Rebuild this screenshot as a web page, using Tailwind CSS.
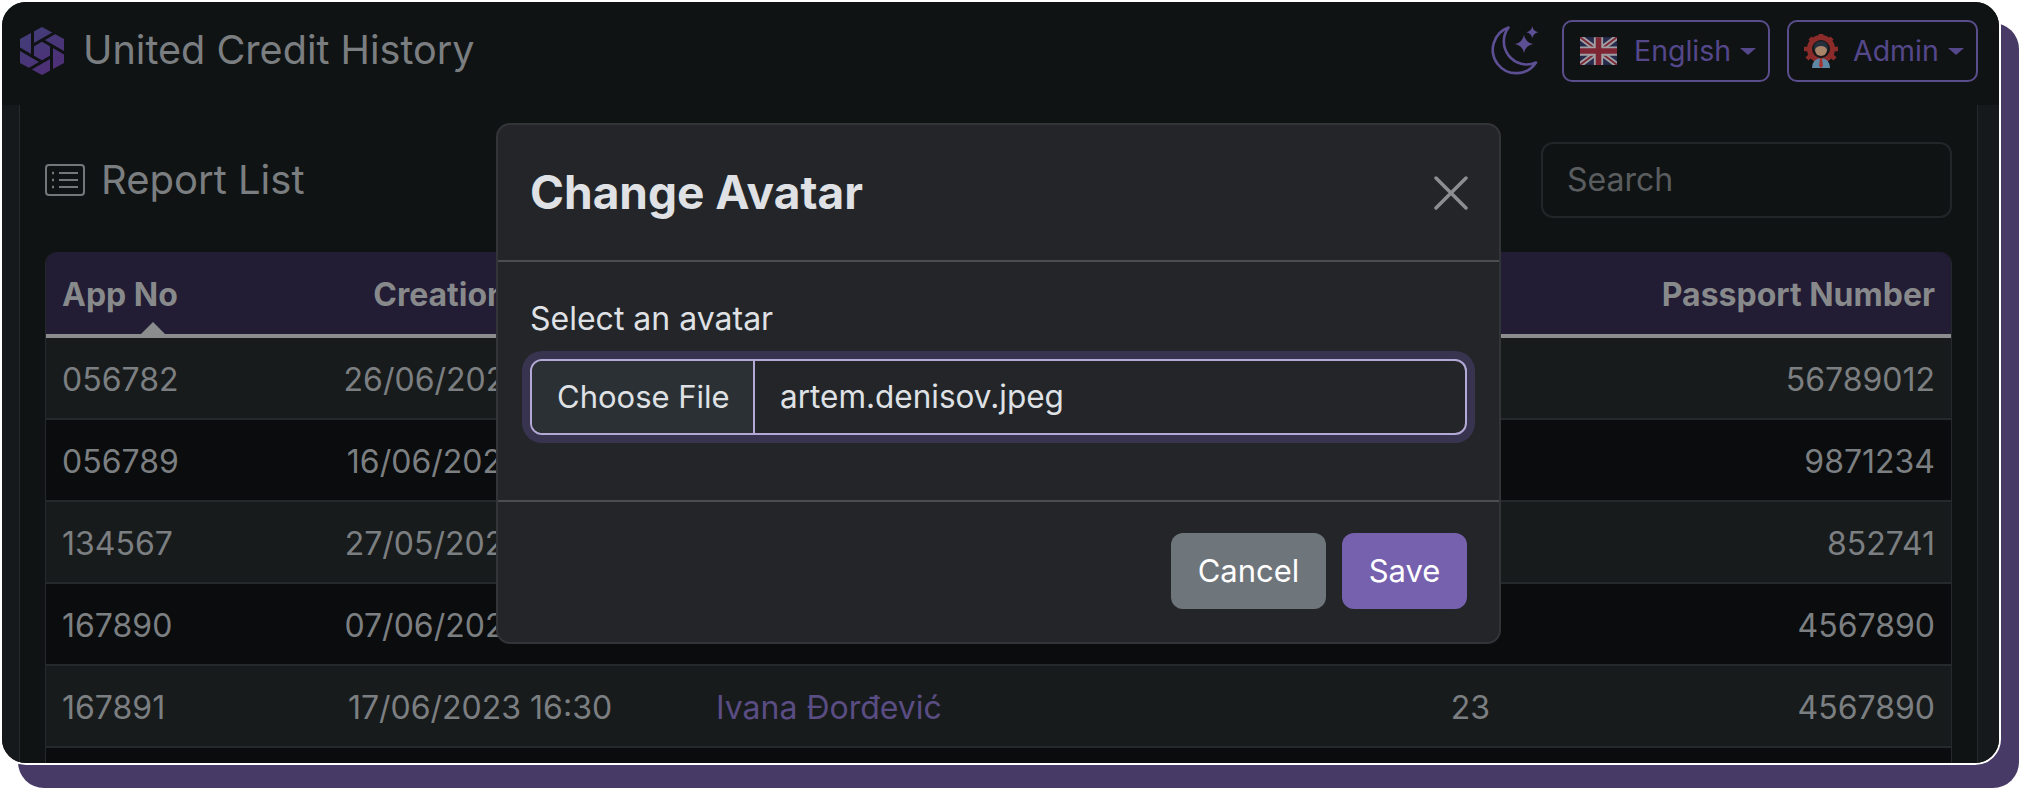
<!DOCTYPE html>
<html lang="en">
<head>
    <meta charset="UTF-8">
    <title>United Credit History</title>
    <script src="https://cdn.jsdelivr.net/npm/@tailwindcss/browser@4"></script>
</head>
<body class="bg-white overflow-hidden h-[790px] font-['Inter','Liberation_Sans',sans-serif]">

    <!-- App frame -->
    <div class="relative w-[2001px] h-[765px] border-2 border-white rounded-[26px] overflow-hidden bg-[#101314] shadow-[18px_23px_0_#483a66]">

        <!-- Navbar -->
        <header class="flex items-center justify-between h-[103px] pb-[5px] pl-[18px] pr-[21px] bg-[#101314]">
            <div class="flex items-center gap-[19px]">
                <svg width="44" height="48" viewBox="0 0 44 48">
                    <defs>
                        <linearGradient id="logoFill" x1="0" y1="0" x2="0.6" y2="1">
                            <stop offset="0" stop-color="#3f4078"/>
                            <stop offset="1" stop-color="#4f2f77"/>
                        </linearGradient>
                    </defs>
                    <path d="M22 0L44 12V36L22 48L0 36V12Z" fill="url(#logoFill)"/>
                    <g stroke="#101314" stroke-width="3" fill="none">
                        <path d="M22 13L45 26.300"/>
                        <path d="M31.500 18.500V44"/>
                        <path d="M31.500 29.500L8 43"/>
                        <path d="M22 35L-1 21.700"/>
                        <path d="M12.500 29.500V4"/>
                        <path d="M12.500 18.500L36 5"/>
                    </g>
                </svg>
                <span class="text-[39.600px] text-[#7b7e80]">United Credit History</span>
            </div>
            <div class="flex items-center gap-[17px]">
                <!-- Theme toggle -->
                <svg class="mr-[5px]" width="50" height="52" viewBox="0 0 50 52" fill="none">
                    <path d="M18.500 2.500A23.500 23.500 0 1 0 46 37.500A23 23 0 0 1 18.500 2.500Z" stroke="#5d4f93" stroke-width="2.600" stroke-linejoin="round"/>
                    <path d="M34 10Q35.500 17.500 43 19Q35.500 20.500 34 28Q32.500 20.500 25 19Q32.500 17.500 34 10Z" fill="#5d4f93"/>
                    <path d="M42.300 1.300Q43.300 6.300 48.300 7.300Q43.300 8.300 42.300 13.300Q41.300 8.300 36.300 7.300Q41.300 6.300 42.300 1.300Z" fill="#5d4f93"/>
                </svg>
                <!-- Language -->
                <button class="flex items-center w-[208px] h-[62px] pl-[16px] border-2 border-[#5a4d8c] rounded-[10px] text-[#54478a] text-[28.500px]">
                    <svg width="37" height="28" viewBox="0 0 60 45" class="mr-[17px]">
                        <rect width="60" height="45" fill="#262a4c"/>
                        <path d="M0 0L60 45M60 0L0 45" stroke="#a0a0a4" stroke-width="9"/>
                        <path d="M0 0L60 45M60 0L0 45" stroke="#7d2533" stroke-width="3"/>
                        <path d="M30 0V45M0 22.500H60" stroke="#a0a0a4" stroke-width="15"/>
                        <path d="M30 0V45M0 22.500H60" stroke="#7d2533" stroke-width="9"/>
                    </svg>
                    English
                    <span class="ml-[9px] border-x-[8px] border-t-[7px] border-x-transparent border-t-[#54478a]"></span>
                </button>
                <!-- Account -->
                <button class="flex items-center w-[191px] h-[62px] pl-[15px] border-2 border-[#5a4d8c] rounded-[10px] text-[#54478a] text-[28.500px]">
                    <svg width="34" height="34" viewBox="0 0 34 34" class="mr-[15px]">
                        <circle cx="17" cy="15" r="11.500" fill="#14181a" stroke="#8c2c2a" stroke-width="5"/>
                        <g stroke="#8c2c2a" stroke-width="4.500">
                            <path d="M17 0V5"/>
                            <path d="M6 4L9.500 7.500"/>
                            <path d="M28 4L24.500 7.500"/>
                            <path d="M0 15H5"/>
                            <path d="M29 15H34"/>
                            <path d="M3 25L6 22"/>
                            <path d="M31 25L28 22"/>
                        </g>
                        <path d="M8 34Q8 25 17 24Q26 25 26 34Z" fill="#5f88a6"/>
                        <path d="M16 24H18L19 32L17 34L15 32Z" fill="#a5332f"/>
                        <circle cx="17" cy="16" r="6" fill="#a98469"/>
                        <path d="M10 17Q9 7 17 7Q25 7 24 17Q22 12 17 12Q12 12 10 17Z" fill="#24303c"/>
                    </svg>
                    Admin
                    <span class="ml-[9px] border-x-[8px] border-t-[7px] border-x-transparent border-t-[#54478a]"></span>
                </button>
            </div>
        </header>

        <div class="flex h-[660px]">
            <div class="w-[18px] border-r border-[#26292b] bg-[#15191b]"></div>

            <main class="w-[1957px] pl-[25px] pr-[25px] bg-[#101314]">
                <div class="flex items-center justify-between pt-[37px]">
                    <div class="flex items-center gap-[16px]">
                        <svg width="40" height="32" viewBox="0 0 40 32" fill="none" stroke="#74777a" stroke-width="2">
                            <rect x="1" y="1" width="38" height="30" rx="3"/>
                            <path d="M14 9H33M14 16H33M14 23H33"/>
                            <path d="M7 9H9M7 16H9M7 23H9" stroke-width="2.500"/>
                        </svg>
                        <h2 class="text-[40px] text-[#7b7e80]">Report List</h2>
                    </div>
                    <div class="flex items-center w-[411px] h-[76px] px-[24px] border-2 border-[#232628] rounded-[12px] text-[32px] text-[#5a5d5f]">Search</div>
                </div>

                <!-- Report table -->
                <div class="mt-[34px] border-x border-[#26292b] rounded-t-[12px] overflow-hidden">
                    <table class="table-fixed w-full border-separate border-spacing-0 text-[32px] text-[#7c7f81]">
                        <colgroup>
                            <col class="w-[214px]">
                            <col class="w-[440px]">
                            <col class="w-[600px]">
                            <col class="w-[205px]">
                            <col>
                        </colgroup>
                        <thead class="[&_th]:pt-[3px]">
                            <tr class="h-[86px] bg-[#221c35] text-[#87898b]">
                                <th class="relative pl-[16px] text-left font-bold border-b-4 border-[#8a8c8e]">
                                    App No
                                    <svg class="absolute left-[95px] bottom-0" width="24" height="12" viewBox="0 0 24 12"><path d="M12 0L24 12H0Z" fill="#8a8c8e"/></svg>
                                </th>
                                <th class="text-center font-bold border-b-4 border-[#8a8c8e]">Creation Date</th>
                                <th class="border-b-4 border-[#8a8c8e]"></th>
                                <th class="border-b-4 border-[#8a8c8e]"></th>
                                <th class="pr-[16px] text-right font-bold border-b-4 border-[#8a8c8e]">Passport Number</th>
                            </tr>
                        </thead>
                        <tbody class="[&_td]:pt-[3px]">
                            <tr class="h-[82px] bg-[#181b1c]">
                                <td class="pl-[16px] border-b-2 border-[#26292b]">056782</td>
                                <td class="text-center border-b-2 border-[#26292b]">26/06/2023 10:30</td>
                                <td class="pl-[16px] border-b-2 border-[#26292b]"></td>
                                <td class="text-right pr-[15px] border-b-2 border-[#26292b]"></td>
                                <td class="text-right pr-[16px] border-b-2 border-[#26292b]">56789012</td>
                            </tr>
                            <tr class="h-[82px] bg-[#0a0c0d]">
                                <td class="pl-[16px] border-b-2 border-[#26292b]">056789</td>
                                <td class="text-center border-b-2 border-[#26292b]">16/06/2023 10:30</td>
                                <td class="pl-[16px] border-b-2 border-[#26292b]"></td>
                                <td class="text-right pr-[15px] border-b-2 border-[#26292b]"></td>
                                <td class="text-right pr-[16px] border-b-2 border-[#26292b]">9871234</td>
                            </tr>
                            <tr class="h-[82px] bg-[#181b1c]">
                                <td class="pl-[16px] border-b-2 border-[#26292b]">134567</td>
                                <td class="text-center border-b-2 border-[#26292b]">27/05/2023 10:30</td>
                                <td class="pl-[16px] border-b-2 border-[#26292b]"></td>
                                <td class="text-right pr-[15px] border-b-2 border-[#26292b]"></td>
                                <td class="text-right pr-[16px] border-b-2 border-[#26292b]">852741</td>
                            </tr>
                            <tr class="h-[82px] bg-[#0a0c0d]">
                                <td class="pl-[16px] border-b-2 border-[#26292b]">167890</td>
                                <td class="text-center border-b-2 border-[#26292b]">07/06/2023 10:30</td>
                                <td class="pl-[16px] border-b-2 border-[#26292b]"></td>
                                <td class="text-right pr-[15px] border-b-2 border-[#26292b]"></td>
                                <td class="text-right pr-[16px] border-b-2 border-[#26292b]">4567890</td>
                            </tr>
                            <tr class="h-[82px] bg-[#181b1c]">
                                <td class="pl-[16px] border-b-2 border-[#26292b]">167891</td>
                                <td class="text-center border-b-2 border-[#26292b]">17/06/2023 16:30</td>
                                <td class="pl-[16px] border-b-2 border-[#26292b] text-[#5a4d83]">Ivana Đorđević</td>
                                <td class="text-right pr-[15px] border-b-2 border-[#26292b]">23</td>
                                <td class="text-right pr-[16px] border-b-2 border-[#26292b]">4567890</td>
                            </tr>
                            <tr class="h-[82px] bg-[#0a0c0d]">
                                <td colspan="5"></td>
                            </tr>
                        </tbody>
                    </table>
                </div>
            </main>

            <div class="flex-1 border-l border-[#26292b] bg-[#15191b]"></div>
        </div>

        <!-- Change Avatar modal -->
        <div class="absolute left-[494px] top-[121px] flex flex-col w-[1005px] h-[521px] border-2 border-[#323538] rounded-[14px] bg-[#232529]">
            <div class="flex items-center justify-between h-[137px] pl-[32px] pr-[31px] border-b-2 border-[#4b4d50]">
                <h3 class="text-[46px] font-bold text-[#dfe1e5]">Change Avatar</h3>
                <svg width="34" height="34" viewBox="0 0 34 34" stroke="#8d8e90" stroke-width="3.500" stroke-linecap="round">
                    <path d="M2 2L32 32M32 2L2 32"/>
                </svg>
            </div>
            <div class="flex-1 pl-[32px] pr-[30px] pt-[40px]">
                <label class="block text-[32px] leading-[34px] text-[#dfe1e5]">Select an avatar</label>
                <div class="flex items-center mt-[23px] w-[937px] h-[76px] border-2 border-[#b3a9d4] rounded-[12px] shadow-[0_0_0_8px_#383450] text-[31.500px] text-[#dfe1e5] bg-[#232529] overflow-hidden">
                    <span class="flex items-center h-full pl-[25px] w-[223px] bg-[#2b3035] border-r-2 border-[#b3a9d4] text-[31px]">Choose File</span>
                    <span class="pl-[25px]">artem.denisov.jpeg</span>
                </div>
            </div>
            <div class="flex items-start justify-end gap-[16px] h-[142px] pt-[31px] pr-[32px] border-t-2 border-[#4b4d50]">
                <button class="w-[155px] h-[76px] rounded-[12px] bg-[#6f767b] text-white text-[31px]">Cancel</button>
                <button class="w-[125px] h-[76px] rounded-[12px] bg-[#7661ae] text-white text-[31px]">Save</button>
            </div>
        </div>
    </div>

</body>
</html>
